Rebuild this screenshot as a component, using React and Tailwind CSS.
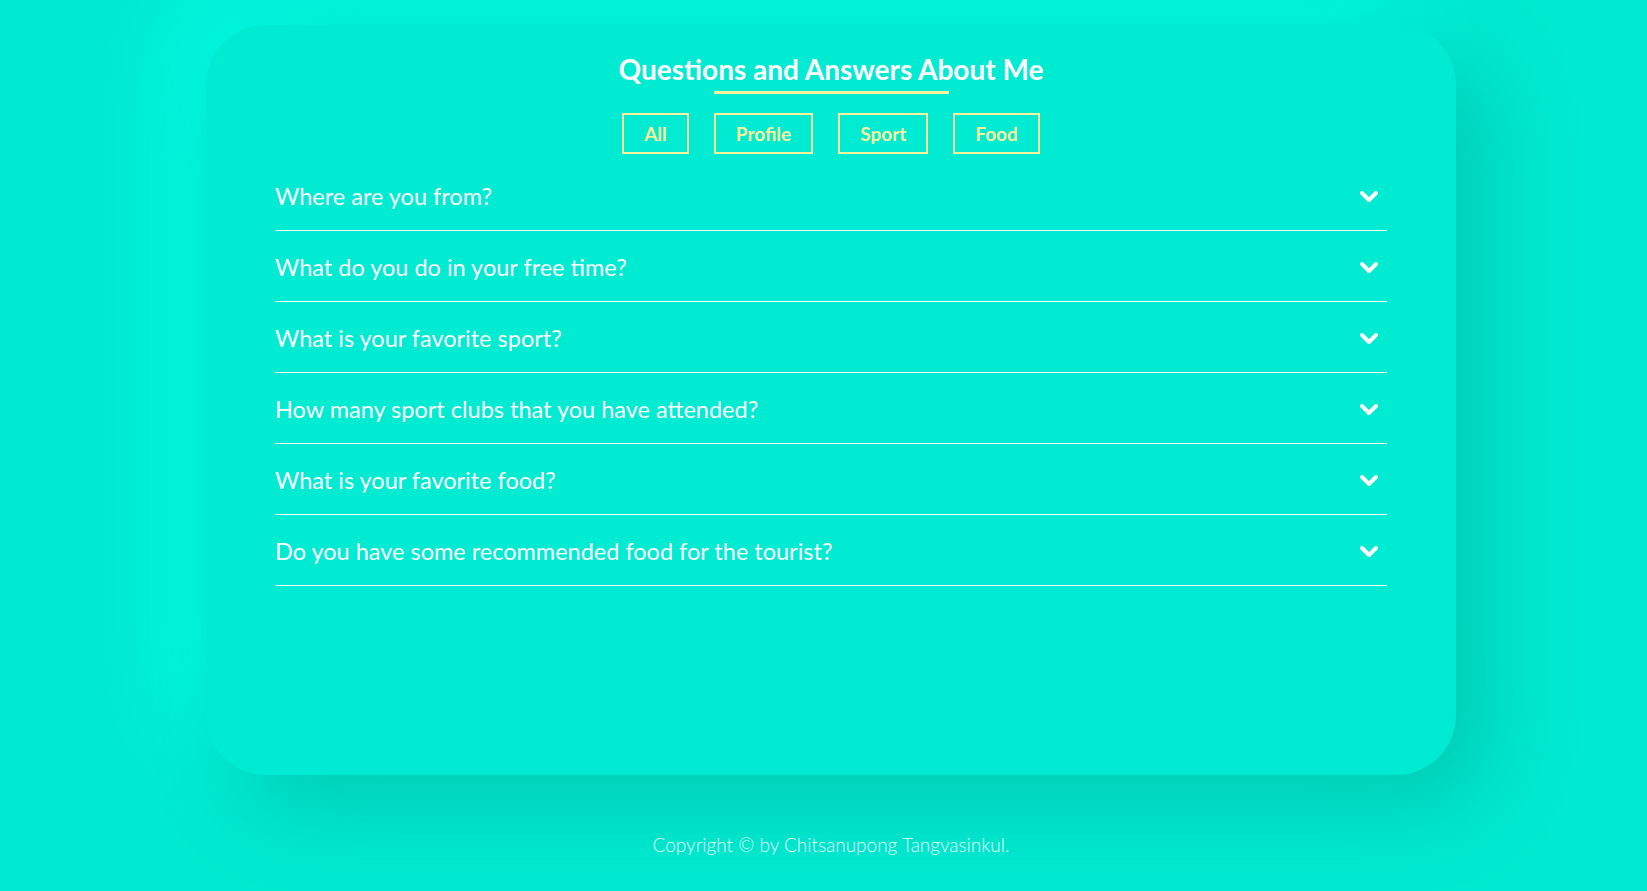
const FILTERS = ["All", "Profile", "Sport", "Food"];

const QUESTIONS = [
  "Where are you from?",
  "What do you do in your free time?",
  "What is your favorite sport?",
  "How many sport clubs that you have attended?",
  "What is your favorite food?",
  "Do you have some recommended food for the tourist?",
];

function Chevron() {
  return (
    <svg width="20" height="14" viewBox="0 0 20 14" className="shrink-0">
      <polyline
        points="3,3 10,10 17,3"
        fill="none"
        stroke="#ffffff"
        strokeWidth="4"
        strokeLinecap="round"
        strokeLinejoin="round"
      />
    </svg>
  );
}

export default function App() {
  return (
    <div
      className="min-h-[891px] w-full overflow-hidden bg-[#00ead1] pt-[25px]"
      style={{ fontFamily: "Lato, 'Noto Sans', sans-serif" }}
    >
      <div className="ml-[206px] h-[750px] w-[1250px] rounded-[60px] bg-[#00ebd2] px-[69px] pt-[26px] shadow-[30px_30px_90px_#00c9b3,-30px_-30px_90px_#00ffe6]">
        <div className="flex flex-col items-center">
          <h1 className="text-[28px] font-bold leading-[36px] text-white">
            Questions and Answers About Me
          </h1>
          <div className="mt-[4px] h-[3px] w-[235px] bg-[#f6f39c]" />
          <div className="mt-[19px] flex gap-[25px]">
            {FILTERS.map((f) => (
              <button
                key={f}
                className="h-[41px] border-2 border-[#f6f39c] px-[20px] pt-[1px] text-[19px] font-bold text-[#f6f39c]"
              >
                {f}
              </button>
            ))}
          </div>
        </div>

        <div className="mt-[6px]">
          {QUESTIONS.map((q) => (
            <div
              key={q}
              className="flex h-[71px] items-center justify-between border-b-[1.5px] border-white pt-[4px] pr-[8px]"
            >
              <span className="text-[23.5px] font-normal text-white">{q}</span>
              <Chevron />
            </div>
          ))}
        </div>
      </div>

      <div className="ml-[206px] w-[1250px] pt-[56px] text-center text-[19px] font-light text-white/90">
        Copyright © by Chitsanupong Tangvasinkul.
      </div>
    </div>
  );
}
